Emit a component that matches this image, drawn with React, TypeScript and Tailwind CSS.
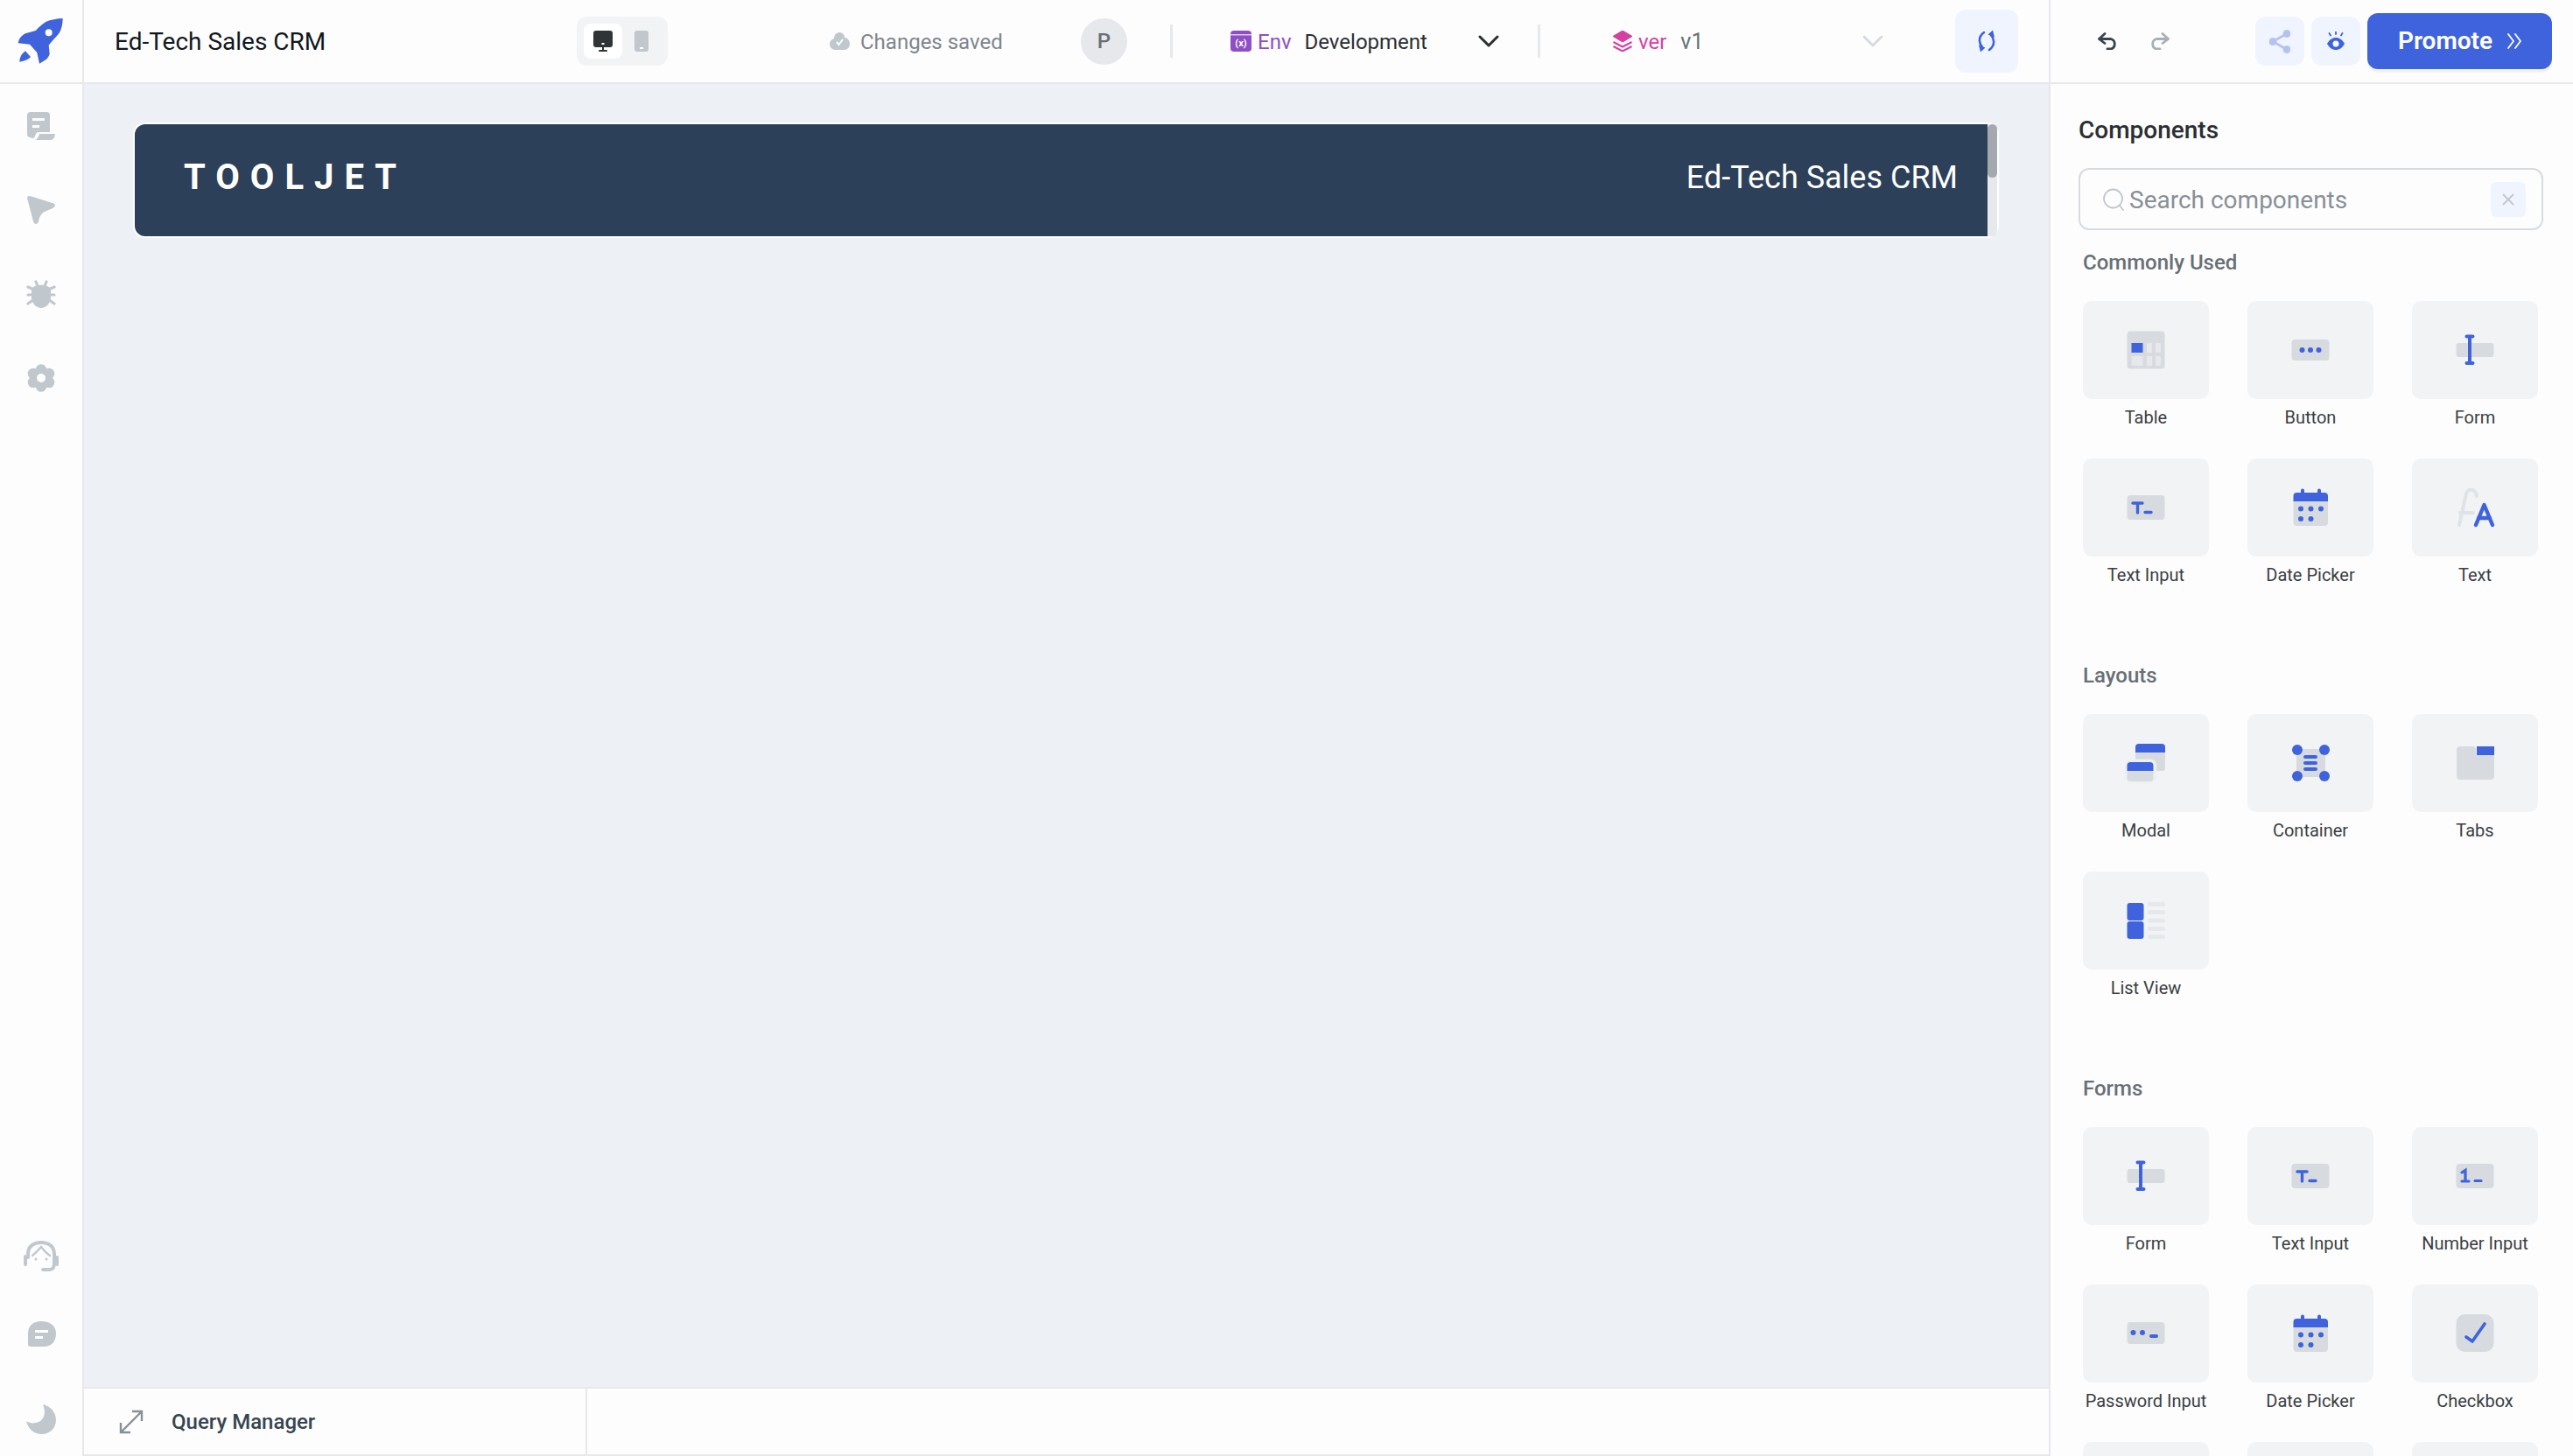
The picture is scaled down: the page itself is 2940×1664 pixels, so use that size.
import type { ReactNode } from "react";

const BLUE = "#3e63dd";
const GREY = "#d7dbdf";
const SOFT = "#e6e8eb";
const RAIL = "#c1c8cd";

const Box = ({ children }: { children: ReactNode }) => (
  <svg width="48" height="48" viewBox="0 0 48 48">
    {children}
  </svg>
);

const TableIcon = () => (
  <Box>
    <rect x="2.5" y="2.5" width="43" height="43" rx="4" fill={GREY} />
    <rect x="7.5" y="16" width="13" height="11" fill={BLUE} />
    <rect x="25" y="16" width="6" height="11" fill={SOFT} />
    <rect x="35" y="16" width="6" height="11" fill={SOFT} />
    <rect x="7.5" y="31" width="13" height="11" fill={SOFT} />
    <rect x="25" y="31" width="6" height="11" fill={SOFT} />
    <rect x="35" y="31" width="6" height="11" fill={SOFT} />
  </Box>
);

const ButtonIcon = () => (
  <Box>
    <rect x="2.5" y="12" width="43" height="24" rx="4" fill={GREY} />
    <circle cx="14.5" cy="24" r="3" fill={BLUE} />
    <circle cx="24" cy="24" r="3" fill={BLUE} />
    <circle cx="33.5" cy="24" r="3" fill={BLUE} />
  </Box>
);

const FormIcon = () => (
  <Box>
    <rect x="2.5" y="16" width="43" height="16" rx="3" fill={GREY} />
    <path d="M18 8.5V39M14.5 8.5H21.5M14.5 39H21.5" stroke={BLUE} strokeWidth="4" strokeLinecap="round" fill="none" />
  </Box>
);

const TextInputIcon = () => (
  <Box>
    <rect x="2.5" y="10" width="43" height="28" rx="4" fill={GREY} />
    <path d="M9 19H20M14.5 19V30M23 29.5H30" stroke={BLUE} strokeWidth="3.4" strokeLinecap="round" fill="none" />
  </Box>
);

const NumberInputIcon = () => (
  <Box>
    <rect x="2.5" y="10" width="43" height="28" rx="4" fill={GREY} />
    <path d="M9 20L13 17.5V30M9 30H17M24 29.5H31" stroke={BLUE} strokeWidth="3.2" strokeLinecap="round" fill="none" />
  </Box>
);

const PasswordIcon = () => (
  <Box>
    <rect x="2.5" y="11" width="43" height="25" rx="4" fill={GREY} />
    <circle cx="9.5" cy="23" r="3" fill={BLUE} />
    <circle cx="20" cy="23" r="3" fill={BLUE} />
    <rect x="28" y="25" width="10" height="4" rx="2" fill={BLUE} />
  </Box>
);

const DateIcon = () => (
  <Box>
    <path d="M4.5 17H44V41a4 4 0 0 1-4 4H8.5a4 4 0 0 1-4-4Z" fill={GREY} />
    <path d="M4.5 17V11a4 4 0 0 1 4-4H13V4.5a2 2 0 0 1 4 0V7H32V4.5a2 2 0 0 1 4 0V7H40a4 4 0 0 1 4 4V17Z" fill={BLUE} />
    {[13, 24.5, 36].map((x) => (
      <circle key={x} cx={x} cy="25.5" r="3" fill={BLUE} />
    ))}
    {[13, 24.5].map((x) => (
      <circle key={x} cx={x} cy="37" r="3" fill={BLUE} />
    ))}
  </Box>
);

const TextIcon = () => (
  <Box>
    <path d="M26 11C25 3 16 1 14 8L6 44M7 30H22" stroke="#dfe3e6" strokeWidth="4" strokeLinecap="round" fill="none" />
    <path d="M25 44L34.5 21L44 44M28 36H41" stroke={BLUE} strokeWidth="4.4" strokeLinecap="round" strokeLinejoin="round" fill="none" />
  </Box>
);

const ModalIcon = () => (
  <Box>
    <path d="M12 12H46V30a3 3 0 0 1-3 3H12Z" fill={GREY} />
    <path d="M12 12V6a4 4 0 0 1 4-4H42a4 4 0 0 1 4 4V12Z" fill={BLUE} />
    <rect x="0" y="19.5" width="36" height="28" rx="7" fill="#eef0f2" />
    <path d="M2.5 33H32.5V41a4 4 0 0 1-4 4H6.5a4 4 0 0 1-4-4Z" fill={GREY} />
    <path d="M2.5 33V27a4 4 0 0 1 4-4H28.5a4 4 0 0 1 4 4V33Z" fill={BLUE} />
  </Box>
);

const ContainerIcon = () => (
  <Box>
    <rect x="8" y="8" width="33" height="32" fill={GREY} />
    {[9, 39].map((y) => (
      <g key={y}>
        <ellipse cx="9" cy={y} rx="6" ry="6" fill={BLUE} />
        <ellipse cx="40" cy={y} rx="6" ry="6" fill={BLUE} />
      </g>
    ))}
    {[15, 22, 29].map((y) => (
      <rect key={y} x="16" y={y} width="16" height="4" rx="2" fill={BLUE} />
    ))}
  </Box>
);

const TabsIcon = () => (
  <Box>
    <path d="M7 5H21a4 4 0 0 1 4 4V15H46V39a4 4 0 0 1-4 4H7a4 4 0 0 1-4-4V9a4 4 0 0 1 4-4Z" fill={GREY} />
    <rect x="26" y="5" width="20" height="10" fill={BLUE} />
  </Box>
);

const ListIcon = () => (
  <Box>
    <rect x="2.5" y="4" width="19" height="20" rx="3" fill={BLUE} />
    <rect x="2.5" y="25" width="19" height="20" rx="3" fill={BLUE} />
    {[3, 12, 21.5, 31, 40].map((y) => (
      <rect key={y} x="26" y={y} width="20" height="5" rx="2.5" fill={SOFT} />
    ))}
  </Box>
);

const CheckboxIcon = () => (
  <Box>
    <rect x="2.5" y="2" width="43" height="43" rx="10" fill={GREY} />
    <path d="M14 28L21 33L35 13" stroke={BLUE} strokeWidth="3.6" strokeLinecap="round" strokeLinejoin="round" fill="none" />
  </Box>
);

const Rocket = () => (
  <svg width="54" height="54" viewBox="0 0 54 54" fill={BLUE}>
    <path
      fillRule="evenodd"
      d="M52.7 1C52.5 9 51 14 48.3 18.3C44 24 40 27 36.7 31.7L37.7 41.7C37 44 35.5 46.5 33.3 48.3L26 52.7L23.3 40L15 30.7L1.7 29.3C2 27 3 25 4 23.3C6 21 8 19 10 18.3L21.7 15C25 11 29 8 33.3 5C39 2.5 46 1.2 52.7 1ZM36.7 13.3a4 4 0 1 0 0 8a4 4 0 0 0 0-8Z"
    />
    <path d="M3.3 50.7C3.5 46 5 42 10 38.3L16 45C14 47.5 9 50 3.3 50.7Z" />
  </svg>
);

const RailPages = () => (
  <svg width="32" height="32" viewBox="0 0 32 32" fill={RAIL}>
    <path
      fillRule="evenodd"
      d="M4 0H22a4 4 0 0 1 4 4V23H13C11 23 10 25 9 27C9 29 8 30 6 30C2 29 0 28 0 25V4a4 4 0 0 1 4-4ZM6 7V10H20V7ZM6 15V18H14V15Z"
    />
    <path d="M14 25H32C31.5 29 30 32 27 32H9C12 31 13 28 14 25Z" />
  </svg>
);

const RailArrow = () => (
  <svg width="32" height="32" viewBox="0 0 32 32" fill={RAIL}>
    <path d="M2 0C0 0 0 2 0.5 4L7 29C8 33 12 33 13 29C14 24 16 20 20 18L29 14C33 12 33 9 29 8L5 0.5Z" />
  </svg>
);

const RailBug = () => (
  <svg width="34" height="32" viewBox="0 0 34 32" fill={RAIL} stroke={RAIL} strokeWidth="3.2" strokeLinecap="round">
    <path stroke="none" d="M6 11C8 4 26 4 28 11V20C28 27 22 32 17 32C12 32 6 27 6 20Z" />
    <path d="M11 2L13 7M23 2L21 7M2 8L9 11M32 8L25 11M2 17H8M32 17H26M2 27L9 22M32 27L25 22" fill="none" />
  </svg>
);

const RailGear = () => (
  <svg width="32" height="32" viewBox="0 0 32 32" fill={RAIL}>
    <circle cx="16" cy="16" r="11" />
    <circle cx="16" cy="6.500" r="6.300" />
    <circle cx="16" cy="25.500" r="6.300" />
    <circle cx="7" cy="11" r="6.300" />
    <circle cx="25" cy="11" r="6.300" />
    <circle cx="7" cy="21" r="6.300" />
    <circle cx="25" cy="21" r="6.300" />
    <circle cx="16" cy="16" r="5" fill="#fdfdfe" />
  </svg>
);

const RailHeadset = () => (
  <svg width="40" height="37" viewBox="0 0 40 37" fill="none" stroke={RAIL}>
    <path d="M5 19V15C5 6 12 2 20 2C28 2 35 6 35 15V26C35 30 33 33 30 33H22" strokeWidth="4" strokeLinecap="round" />
    <path d="M10 17C13 14 16 12 20 7C24 12 27 15 30 17" strokeWidth="2.4" strokeLinecap="round" />
    <path d="M2 18V27M38 19V27" strokeWidth="4" strokeLinecap="round" />
    <circle cx="14" cy="21" r="1.5" fill={RAIL} stroke="none" />
    <circle cx="26" cy="21" r="1.5" fill={RAIL} stroke="none" />
  </svg>
);

const RailChat = () => (
  <svg width="33" height="30" viewBox="0 0 33 30" fill={RAIL}>
    <path
      fillRule="evenodd"
      d="M16 0C26 0 33 5 33 14C33 23 28 29 18 29H4C2 29 1 28 1 26V14C1 5 7 0 16 0ZM9 10V13H24V10ZM9 17V20H18V17Z"
    />
  </svg>
);

const RailMoon = () => (
  <svg width="34" height="34" viewBox="0 0 34 34" fill={RAIL}>
    <path d="M19 0C28 2 34 9 34 18C34 27 27 34 18 34C9 34 2 28 0 19C3 21 7 22 11 21C18 20 23 13 20 3Z" />
  </svg>
);

const Chevron = ({ color }: { color: string }) => (
  <svg width="24" height="14" viewBox="0 0 24 14" fill="none">
    <path d="M2 2L12 12L22 2" stroke={color} strokeWidth="3" strokeLinecap="round" strokeLinejoin="round" />
  </svg>
);

interface Widget {
  name?: string;
  icon?: ReactNode;
}

const sections: { title: string; items: Widget[] }[] = [
  {
    title: "Commonly Used",
    items: [
      { name: "Table", icon: <TableIcon /> },
      { name: "Button", icon: <ButtonIcon /> },
      { name: "Form", icon: <FormIcon /> },
      { name: "Text Input", icon: <TextInputIcon /> },
      { name: "Date Picker", icon: <DateIcon /> },
      { name: "Text", icon: <TextIcon /> },
    ],
  },
  {
    title: "Layouts",
    items: [
      { name: "Modal", icon: <ModalIcon /> },
      { name: "Container", icon: <ContainerIcon /> },
      { name: "Tabs", icon: <TabsIcon /> },
      { name: "List View", icon: <ListIcon /> },
    ],
  },
  {
    title: "Forms",
    items: [
      { name: "Form", icon: <FormIcon /> },
      { name: "Text Input", icon: <TextInputIcon /> },
      { name: "Number Input", icon: <NumberInputIcon /> },
      { name: "Password Input", icon: <PasswordIcon /> },
      { name: "Date Picker", icon: <DateIcon /> },
      { name: "Checkbox", icon: <CheckboxIcon /> },
      // next row runs off the bottom of the panel
      {},
      {},
      {},
    ],
  },
];

const WidgetCard = ({ name, icon }: Widget) => (
  <div className="h-[180px] w-[144px]">
    <div className="flex h-[112px] items-center justify-center rounded-[10px] bg-[#f1f3f5]">{icon}</div>
    {name && <p className="mt-[10px] whitespace-nowrap text-center text-[20px] leading-[22px] text-[#3a3f42]">{name}</p>}
  </div>
);

const Header = () => (
  <header className="flex h-[96px] shrink-0 items-center border-b-2 border-[#e6e8eb] bg-[#fdfdfe]">
    <div className="flex h-full w-[96px] shrink-0 items-center justify-center border-r-2 border-[#e6e8eb] pr-[2px]">
      <Rocket />
    </div>
    <div className="w-[563px] shrink-0 pl-[35px] pt-[1px] text-[28px] leading-[36px] text-[#11181c]">Ed-Tech Sales CRM</div>

    {/* desktop / mobile toggle */}
    <div className="flex h-[56px] w-[104px] shrink-0 items-center rounded-[12px] bg-[#f1f3f5] pl-[8px]">
      <div className="flex h-[40px] w-[44px] items-center justify-center rounded-[8px] bg-white">
        <svg width="24" height="24" viewBox="0 0 24 24" fill="#2f3437">
          <rect x="1" y="0" width="22" height="19" rx="3" />
          <rect x="11" y="19" width="2" height="3" />
          <rect x="7" y="22" width="10" height="2" rx="1" />
          <rect x="10.500" y="14" width="3" height="2" fill="#fff" />
        </svg>
      </div>
      <div className="ml-[14px]">
        <svg width="16" height="24" viewBox="0 0 16 24" fill={RAIL}>
          <rect width="16" height="24" rx="3" />
          <rect x="6" y="19" width="4" height="2" fill="#fff" />
        </svg>
      </div>
    </div>

    <div className="flex w-[472px] shrink-0 items-center pl-[185px]">
      <svg width="23" height="20" viewBox="0 0 23 20" fill={RAIL}>
        <path d="M11 0C15 0 17 3 17 6C20 6 23 9 23 13C23 17 20 20 17 20H6C3 20 0 17 0 13C0 10 2 8 5 7C5 3 8 0 11 0Z" />
        <path d="M8 11L10.500 14L15 8" stroke="#fff" strokeWidth="2" fill="none" />
      </svg>
      <span className="ml-[12px] whitespace-nowrap pt-[1px] text-[24px] leading-[32px] text-[#7e868c]">Changes saved</span>
    </div>

    <div className="flex h-[53px] w-[53px] shrink-0 items-center justify-center rounded-full bg-[#e6e8eb] text-[24px] font-medium text-[#687076]">
      P
    </div>
    <div className="ml-[49px] h-[38px] w-[3px] shrink-0 bg-[#e6e8eb]" />

    <div className="flex w-[349px] shrink-0 items-center pl-[66px]">
      <svg width="24" height="24" viewBox="0 0 24 24">
        <rect width="24" height="24" rx="4" fill="#8e4ec6" />
        <rect y="4" width="24" height="1.500" fill="#fff" opacity="0.7" />
        <text x="12" y="18" textAnchor="middle" fontSize="11" fontWeight="700" fill="#fff" fontFamily="Roboto, sans-serif">
          (x)
        </text>
      </svg>
      <span className="ml-[7px] pt-[1px] text-[24px] leading-[32px] text-[#8e4ec6]">Env</span>
      <span className="ml-[15px] whitespace-nowrap pt-[1px] text-[24px] leading-[32px] text-[#2b2f32]">Development</span>
    </div>
    <Chevron color="#2b2f32" />
    <div className="ml-[44px] h-[38px] w-[3px] shrink-0 bg-[#e6e8eb]" />

    <div className="flex w-[368px] shrink-0 items-center pl-[82px]">
      <svg width="24" height="24" viewBox="0 0 24 24" fill="none">
        <path d="M12 0L23 6.500L12 13L1 6.500Z" fill="#d6409f" strokeLinejoin="round" stroke="#d6409f" strokeWidth="1" />
        <path d="M1.500 13L12 18.500L22.500 13M1.500 18L12 23.500L22.500 18" stroke="#d6409f" strokeWidth="2" />
      </svg>
      <span className="ml-[6px] pt-[1px] text-[24px] leading-[32px] text-[#d6409f]">ver</span>
      <span className="ml-[16px] pt-[1px] text-[25px] leading-[32px] text-[#687076]">v1</span>
    </div>
    <Chevron color="#d7dbdf" />

    <div className="ml-[82px] flex h-[72px] w-[72px] shrink-0 items-center justify-center rounded-[12px] bg-[#f0f4ff]">
      <svg width="20" height="26" viewBox="0 0 20 26" fill="none" stroke={BLUE} strokeWidth="2.600" strokeLinecap="round">
        <path d="M7 3C3 6 1.500 9 2 13C2.300 16 3 18 5 20" />
        <path d="M1 17.500L8.500 20.500L3 25.500Z" fill={BLUE} stroke="none" />
        <path d="M13 23C17 20 18.500 17 18 13C17.700 10 17 8 15 6" />
        <path d="M19 8.500L11.500 5.500L17 0.500Z" fill={BLUE} stroke="none" />
      </svg>
    </div>

    <div className="ml-[35px] flex h-full flex-1 items-center border-l-2 border-[#e6e8eb] pl-[54px]">
      <svg width="23" height="20" viewBox="0 0 23 20" fill="none" stroke="#36454f" strokeWidth="2.800" strokeLinecap="round" strokeLinejoin="round">
        <path d="M8 1.500L1.500 7.500L8 12.500M1.500 7.500H15a6 6 0 0 1 0 11.500H11" />
      </svg>
      <svg className="ml-[36px]" width="23" height="20" viewBox="0 0 23 20" fill="none" stroke="#a8b0b5" strokeWidth="2.800" strokeLinecap="round" strokeLinejoin="round">
        <path d="M15 1.500L21.500 7.500L15 12.500M21.500 7.500H8a6 6 0 0 0 0 11.500H12" />
      </svg>

      <div className="ml-[98px] flex h-[56px] w-[56px] items-center justify-center rounded-[12px] bg-[#f0f4ff]">
        <svg width="24" height="27" viewBox="0 0 24 27" fill="#b4c2f0" stroke="#b4c2f0">
          <circle cx="20" cy="4.500" r="4" />
          <circle cx="20" cy="22.500" r="4" />
          <circle cx="4" cy="13.500" r="4" />
          <path d="M20 4.500L4 13.500L20 22.500" fill="none" strokeWidth="2.600" />
        </svg>
      </div>
      <div className="ml-[8px] flex h-[56px] w-[56px] items-center justify-center rounded-[12px] bg-[#f0f4ff]">
        <svg width="20" height="22" viewBox="0 0 20 22" fill="none">
          <path d="M0 14C3 9 6 7 10 7C14 7 17 9 20 14C17 19 14 21 10 21C6 21 3 19 0 14Z" fill={BLUE} />
          <circle cx="10" cy="14" r="3.500" fill="#fff" />
          <path d="M10 0V3M2.500 2L4 4.500M17.500 2L16 4.500" stroke={BLUE} strokeWidth="1.800" strokeLinecap="round" />
        </svg>
      </div>
      <button className="ml-[8px] flex h-[64px] w-[211px] items-center justify-center gap-[17px] rounded-[12px] bg-[#3e63dd] text-[28px] font-semibold text-white shadow-[0_4px_0_#f1f3f5]">
        Promote
        <svg width="16" height="18" viewBox="0 0 16 18" fill="none" stroke="#fff" strokeWidth="1.800" strokeLinecap="round" strokeLinejoin="round">
          <path d="M1 1L7 9L1 17M9 1L15 9L9 17" />
        </svg>
      </button>
    </div>
  </header>
);

const Rail = () => (
  <aside className="flex w-[96px] shrink-0 flex-col justify-between border-r-2 border-[#e6e8eb] bg-[#fdfdfe] pb-[25px]">
    <div className="flex flex-col items-center gap-[64px] pt-[32px]">
      <RailPages />
      <RailArrow />
      <RailBug />
      <RailGear />
    </div>
    <div className="flex flex-col items-center">
      <RailHeadset />
      <div className="mt-[55px] mb-[65px] flex">
        <RailChat />
      </div>
      <RailMoon />
    </div>
  </aside>
);

const Canvas = () => (
  <main className="flex min-w-0 flex-1 flex-col">
    <div className="flex-1 bg-[#edf0f5] pl-[56px] pt-[44px]">
      <div className="flex h-[132px] w-[2132px] rounded-[14px] border-2 border-white bg-white">
        <div className="flex flex-1 items-center justify-between rounded-l-[12px] bg-[#2d4059] pb-[6px] pl-[56px] pr-[34px] text-white">
          <span className="text-[40px] font-bold leading-[48px] tracking-[0.3em]">TOOLJET</span>
          <span className="text-[36px] leading-[48px]">Ed-Tech Sales CRM</span>
        </div>
        <div className="w-[11px] rounded-r-[6px] bg-[#e6e8eb]">
          <div className="h-[61px] rounded-[6px] bg-[#a3a9ae]" />
        </div>
      </div>
    </div>
    <div className="flex h-[79px] shrink-0 border-y-2 border-[#e6e8eb] bg-[#fdfdfe]">
      <div className="flex w-[575px] items-center border-r-2 border-[#e6e8eb] pl-[40px]">
        <svg width="28" height="28" viewBox="0 0 28 28" fill="none" stroke="#889096" strokeWidth="2.400">
          <path d="M2 26L26 2M15 2H26V13M2 15V26H13" />
        </svg>
        <span className="ml-[32px] whitespace-nowrap text-[24px] font-medium leading-[32px] text-[#36454f]">Query Manager</span>
      </div>
    </div>
  </main>
);

const ComponentsPanel = () => (
  <aside className="h-full w-[599px] shrink-0 overflow-hidden border-l-2 border-[#e6e8eb] bg-[#fdfdfe] pl-[32px] pt-[34px]">
    <h2 className="pt-[1px] text-[28px] font-medium leading-[35px] text-[#2b2f32]">Components</h2>
    <div className="mt-[26px] flex h-[71px] w-[531px] items-center rounded-[12px] border-2 border-[#d7dbdf] pl-[26px] pr-[18px]">
      <svg width="24" height="26" viewBox="0 0 24 26" fill="none" stroke={RAIL} strokeWidth="1.800">
        <circle cx="11.500" cy="12" r="10.500" />
        <path d="M19 20L23 25" strokeLinecap="round" />
      </svg>
      <span className="ml-[6px] pt-[1px] text-[28px] leading-[35px] text-[#889096]">Search components</span>
      <div className="ml-auto flex h-[40px] w-[40px] items-center justify-center rounded-[6px] bg-[#f0f4ff]">
        <svg width="16" height="16" viewBox="0 0 16 16" stroke={RAIL} strokeWidth="1.800">
          <path d="M2 2L14 14M14 2L2 14" />
        </svg>
      </div>
    </div>
    <div className="pl-[5px]">
      {sections.map((section, idx) => (
        <section key={section.title} className={idx === 0 ? "mt-[21px]" : "mt-[52px]"}>
          <h3 className="text-[24px] font-medium leading-[32px] text-[#687076]">{section.title}</h3>
          <div className="mt-[28px] grid grid-cols-[repeat(3,144px)] gap-x-[44px]">
            {section.items.map((item, i) => (
              <WidgetCard key={i} {...item} />
            ))}
          </div>
        </section>
      ))}
    </div>
  </aside>
);

const App = () => {
  return (
    <div className="flex h-[1664px] w-[2940px] flex-col overflow-hidden bg-[#fdfdfe] font-['Roboto',sans-serif]">
      <Header />
      <div className="flex min-h-0 flex-1">
        <Rail />
        <Canvas />
        <ComponentsPanel />
      </div>
    </div>
  );
};

export default App;
